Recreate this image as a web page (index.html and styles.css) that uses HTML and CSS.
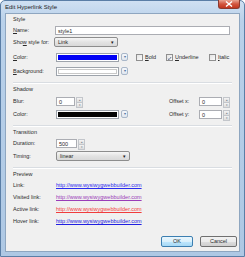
FILE: index.html
```html
<!DOCTYPE html>
<html lang="en">
<head>
  <meta charset="UTF-8" />
  <title>Edit Hyperlink Style</title>
  <link rel="stylesheet" href="styles.css">
</head>
<body>
  <div class="window">
    <div class="titlebar">
      <span class="title">Edit Hyperlink Style</span>
      <span class="close">
        <svg width="8" height="6" viewBox="0 0 8 6"><path d="M1 0.5 L7 5.5 M7 0.5 L1 5.5" stroke="#fff" stroke-width="1.4"/></svg>
      </span>
    </div>

    <div class="client">
      <div class="heading">Style</div>
      <div class="row">
        <span class="lbl"><u>N</u>ame:</span>
        <div class="field name">style1</div>
      </div>
      <div class="row">
        <span class="lbl">Sho<u>w</u> style for:</span>
        <div class="combo short">Link<span class="arrow">&#9662;</span></div>
      </div>
      <div class="row gap3">
        <span class="lbl"><u>C</u>olor:</span>
        <div class="swatch"><span class="fill blue"></span></div>
        <span class="pick">&#9662;</span>
        <span class="check bold"><span class="box"></span><span><u>B</u>old</span></span>
        <span class="check under"><span class="box"><svg width="7" height="7" viewBox="0 0 7 7"><path d="M1.2 3.6 L2.8 5.2 L5.8 1.4" stroke="#2b3f6a" stroke-width="1" fill="none"/></svg></span><span><u>U</u>nderline</span></span>
        <span class="check"><span class="box"></span><span><u>I</u>talic</span></span>
      </div>
      <div class="row gap2">
        <span class="lbl"><u>B</u>ackground:</span>
        <div class="swatch"><span class="fill white"></span></div>
        <span class="pick">&#9662;</span>
      </div>

      <div class="divider"></div>
      <div class="heading">Shadow</div>
      <div class="row gap1 pair">
        <span class="lbl">Blur:</span>
        <div class="field num">0</div>
        <span class="spin"><i>&#9652;</i><i>&#9662;</i></span>
        <span class="lbl right">Offset x:</span>
        <div class="field off">0</div>
        <span class="spin"><i>&#9652;</i><i>&#9662;</i></span>
      </div>
      <div class="row gap1 pair">
        <span class="lbl">Color:</span>
        <div class="swatch"><span class="fill black"></span></div>
        <span class="pick">&#9662;</span>
        <span class="lbl right">Offset y:</span>
        <div class="field off">0</div>
        <span class="spin"><i>&#9652;</i><i>&#9662;</i></span>
      </div>

      <div class="divider"></div>
      <div class="heading">Transition</div>
      <div class="row">
        <span class="lbl">Duration:</span>
        <div class="field dur">500</div>
        <span class="spin"><i>&#9652;</i><i>&#9662;</i></span>
      </div>
      <div class="row gap1">
        <span class="lbl">Timing:</span>
        <div class="combo long">linear<span class="arrow">&#9662;</span></div>
      </div>

      <div class="divider"></div>
      <div class="heading">Preview</div>
      <div class="row">
        <span class="lbl">Link:</span>
        <span class="link normal">http://www.wysiwygwebbuilder.com</span>
      </div>
      <div class="row">
        <span class="lbl">Visited link:</span>
        <span class="link visited">http://www.wysiwygwebbuilder.com</span>
      </div>
      <div class="row">
        <span class="lbl">Active link:</span>
        <span class="link active">http://www.wysiwygwebbuilder.com</span>
      </div>
      <div class="row">
        <span class="lbl">Hover link:</span>
        <span class="link hover">http://www.wysiwygwebbuilder.com</span>
      </div>

      <div class="buttons">
        <span class="btn default">OK</span>
        <span class="btn">Cancel</span>
      </div>
    </div>
  </div>
</body>
</html>
```

FILE: styles.css
```css
:root {
  --frame: #b9d1ea;
  --client: #f0f0f0;
  --text: #2a2a2a;
  --border: #abadb3;
}

body {
  margin: 0;
  font-family: "Liberation Sans", Arial, sans-serif;
  font-size: 5.5px;
  color: var(--text);
  background: #ffffff;
}

u {
  text-decoration: underline;
}

.window {
  width: 245px;
  height: 257px;
  box-sizing: border-box;
  border: 1px solid #5a7ea6;
  border-radius: 5px 5px 0 0;
  padding: 0 4px 4px;
  background: linear-gradient(#cfe0f2, var(--frame) 20px, #aec8e4);
  display: flex;
  flex-direction: column;
}

.titlebar {
  height: 12px;
  display: flex;
  justify-content: space-between;
  align-items: flex-start;
}

.title {
  font-size: 6px;
  color: #1e1e1e;
  margin-top: 3px;
}

.close {
  width: 22px;
  height: 9px;
  margin-top: -1px;
  border: 1px solid #8a3a30;
  border-top: none;
  border-radius: 0 0 3px 3px;
  box-sizing: border-box;
  background: linear-gradient(#e8a493, #d2553e 50%, #c1351e);
  display: flex;
  align-items: center;
  justify-content: center;
}

.client {
  flex: 1;
  background: var(--client);
  border: 1px solid #8ea6c0;
  padding: 0 7px 0 7px;
  display: flex;
  flex-direction: column;
}

.heading {
  height: 10px;
  line-height: 10px;
}

.row {
  height: 12px;
  display: flex;
  align-items: center;
}

.row.pair {
  padding-right: 2px;
}

.gap1 { margin-top: 1px; }
.gap2 { margin-top: 2px; }
.gap3 { margin-top: 3px; }

.lbl {
  width: 42px;
  flex-shrink: 0;
  white-space: nowrap;
}

.lbl.right {
  width: 30px;
  margin-left: auto;
}

.field {
  height: 9px;
  line-height: 8px;
  box-sizing: border-box;
  background: #fff;
  border: 1px solid var(--border);
  padding-left: 2px;
}

.field.name { width: 175px; }
.field.num { width: 19px; margin-left: 1px; }
.field.off { width: 23px; }
.field.dur { width: 21px; margin-left: 1px; }

.spin {
  width: 7px;
  height: 9px;
  margin-left: 1px;
  display: flex;
  flex-direction: column;
  font-size: 3px;
  color: #6d7a8a;
}

.spin i {
  flex: 1;
  font-style: normal;
  line-height: 4px;
  text-align: center;
  background: linear-gradient(#f4f4f4, #dcdcdc);
  border: 1px solid #c3c6cb;
  box-sizing: border-box;
}

.spin i + i {
  border-top: none;
}

.combo {
  height: 10px;
  box-sizing: border-box;
  border: 1px solid #8d8d8d;
  border-radius: 2px;
  background: linear-gradient(#f6f6f6, #e3e3e3 50%, #d9d9d9);
  padding-left: 3px;
  display: flex;
  align-items: center;
  justify-content: space-between;
}

.combo.short { width: 64px; margin-left: -1px; }
.combo.long { width: 74px; margin-left: 1px; }

.arrow {
  font-size: 5px;
  color: #1a1a1a;
  margin-right: 3px;
}

.swatch {
  width: 63px;
  height: 9px;
  margin-left: 1px;
  box-sizing: border-box;
  border: 1px solid #9da3ab;
  background: #fff;
  padding: 1px;
  display: flex;
}

.fill {
  flex: 1;
}

.fill.blue { background: #0000f5; }
.fill.black { background: #050505; }
.fill.white { background: #fff; border: 1px solid #c8c8c8; }

.pick {
  width: 7px;
  height: 8px;
  margin-left: 2px;
  box-sizing: border-box;
  border: 1px solid #a9b7c9;
  border-radius: 2px;
  background: linear-gradient(#f4f7fb, #dfe6ef);
  font-size: 4px;
  line-height: 6px;
  text-align: center;
  color: #4e6e99;
}

.check {
  display: flex;
  align-items: center;
  gap: 2px;
}

.check.bold { width: 30px; margin-left: 8px; }
.check.under { width: 43px; }

.box {
  width: 7px;
  height: 7px;
  box-sizing: border-box;
  border: 1px solid #8f8f8f;
  background: linear-gradient(135deg, #e4e4e4, #fafafa);
  display: flex;
}

.divider {
  height: 1px;
  margin-top: 5px;
  background: #d9dde2;
  border-bottom: 1px solid #fff;
}

.link {
  text-decoration: underline;
  white-space: nowrap;
  margin-left: 1px;
}

.link.normal { color: #2a2aee; }
.link.visited { color: #9a3cb8; }
.link.active { color: #f03c3c; }
.link.hover { color: #2020e0; }

.buttons {
  margin-top: auto;
  margin-bottom: 4px;
  margin-right: -5px;
  display: flex;
  justify-content: flex-end;
  gap: 7px;
}

.btn {
  width: 37px;
  height: 11px;
  line-height: 9px;
  box-sizing: border-box;
  text-align: center;
  border: 1px solid #707070;
  border-radius: 2px;
  background: linear-gradient(#f2f2f2, #ebebeb 50%, #dddddd 51%, #cfcfcf);
}

.btn.default {
  width: 32px;
  border-color: #3c7fb1;
  background: linear-gradient(#eaf6fd, #d9f0fc 50%, #bee6fd 51%, #a7d9f5);
}
```
